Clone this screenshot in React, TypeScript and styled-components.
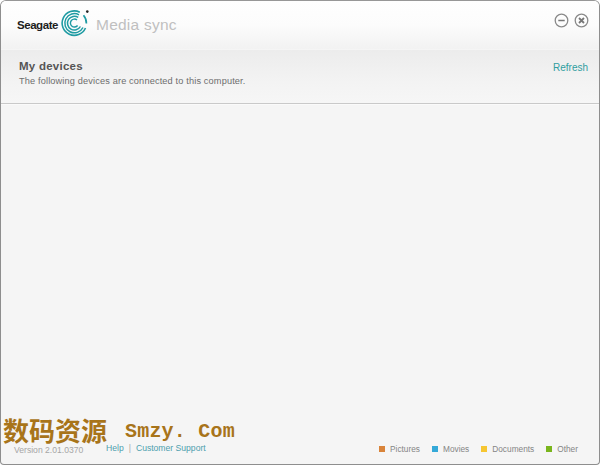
import { createGlobalStyle, styled } from "styled-components"

const Global = createGlobalStyle`
  html, body { margin: 0; padding: 0; background: #fff; }
  body { font-family: "Liberation Sans", Arial, sans-serif; }
`

const Window = styled.div`
  position: relative;
  box-sizing: border-box;
  width: 600px;
  height: 465px;
  display: flex;
  flex-direction: column;
  background: #f5f5f5;
  border: 1px solid #8e8e8e;
  border-top-color: #979797;
  border-radius: 6px 6px 4px 4px;
  overflow: hidden;
`

const Header = styled.div`
  height: 48px;
  flex: none;
  box-sizing: border-box;
  display: flex;
  align-items: flex-start;
  justify-content: space-between;
  background: linear-gradient(#fefefe, #fcfcfc 50%, #f2f2f2);
  padding: 8px 10px 0 16px;
`

const Brand = styled.div`
  display: flex;
  align-items: center;
  gap: 2px;
`

const BrandName = styled.span`
  font-size: 11.5px;
  font-weight: 700;
  letter-spacing: -0.45px;
  color: #1d1d1d;
  margin-top: 4px;
`

const AppName = styled.span`
  font-size: 15.5px;
  color: #c0c0c0;
  margin: 4px 0 0 5px;
  letter-spacing: 0.25px;
`

const WindowButtons = styled.div`
  display: flex;
  gap: 5px;
  margin-top: 4px;
`

const Devices = styled.div`
  height: 54px;
  flex: none;
  box-sizing: border-box;
  margin-top: 1px;
  padding: 10px 11px 0 18px;
  display: flex;
  justify-content: space-between;
  background: linear-gradient(#ececec, #f3f3f3 60%, #f6f6f6);
  border-bottom: 1px solid #c9c9c9;
`

const Title = styled.div`
  font-size: 11.5px;
  font-weight: 700;
  color: #555;
  letter-spacing: 0.25px;
`

const Subtitle = styled.div`
  font-size: 9.2px;
  color: #6d6d6d;
  margin-top: 4px;
  letter-spacing: 0.15px;
`

const Refresh = styled.a`
  font-size: 10px;
  color: #2f9ea0;
  margin-top: 2px;
`

const Content = styled.div`
  flex: 1;
  border-top: 1px solid #fafafa;
`

const Footer = styled.div`
  height: 22px;
  flex: none;
  display: flex;
  justify-content: space-between;
  padding: 0 21px 0 13px;
  font-size: 8.6px;
`

const Links = styled.div`
  display: flex;
  margin-top: 1px;
`

const Version = styled.span`
  color: #a6a6a6;
  font-size: 8.6px;
  width: 92px;
  margin-top: 2px;
`

const Link = styled.a`
  color: #4d9fae;
`

const Sep = styled.span`
  color: #aaa;
  margin: 0 5px;
`

const Legend = styled.div`
  display: flex;
  gap: 12px;
  margin-top: 1px;
`

const LegendItem = styled.div`
  display: flex;
  align-items: center;
  gap: 5px;
  height: 11px;
  color: #858585;
  font-size: 8.3px;
`

const Swatch = styled.i<{ $color: string }>`
  width: 6px;
  height: 6px;
  background: ${(p) => p.$color};
`

const Watermark = styled.div`
  position: absolute;
  left: 2px;
  top: 414px;
  display: flex;
  align-items: center;
  gap: 18px;
  color: #a8741a;
  font-weight: 700;
  white-space: nowrap;
`

const WatermarkCjk = styled.span`
  font-family: "Noto Sans CJK SC", sans-serif;
  font-size: 26px;
  line-height: 30px;
`

const WatermarkLatin = styled.span`
  font-family: "Liberation Mono", monospace;
  font-size: 20px;
  letter-spacing: 0.2px;
  margin-top: 3px;
`

function Logo() {
  return (
    <svg width="29" height="28" viewBox="0 0 29 28" fill="none" stroke="#1f9ba3">
      <path d="M19.8 3.2A12.2 12.2 0 1 0 25.5 19" strokeWidth="1.6" />
      <path d="M19 5.8A9.6 9.6 0 1 0 23 18.5" strokeWidth="1.5" />
      <path d="M18.2 8.4A6.9 6.9 0 1 0 20.4 17.5" strokeWidth="1.5" />
      <path d="M17 11A4 4 0 1 0 17.6 16.5" strokeWidth="1.4" />
      <path d="M23.5 6.2A12 12 0 0 1 26.4 14.5" strokeWidth="1.7" />
      <circle cx="27.3" cy="2.6" r="1.3" fill="#222" stroke="none" />
    </svg>
  )
}

function MinimizeIcon() {
  return (
    <svg width="15" height="15" viewBox="0 0 15 15" fill="none">
      <circle cx="7.5" cy="7.5" r="6.3" stroke="#8a8a8a" strokeWidth="1.3" />
      <path d="M4.3 7.5h6.4" stroke="#777" strokeWidth="1.7" />
    </svg>
  )
}

function CloseIcon() {
  return (
    <svg width="15" height="15" viewBox="0 0 15 15" fill="none">
      <circle cx="7.5" cy="7.5" r="6.3" stroke="#8a8a8a" strokeWidth="1.3" />
      <path d="M5 5l5 5M10 5l-5 5" stroke="#777" strokeWidth="1.8" />
    </svg>
  )
}

const legend = [
  { label: "Pictures", color: "#d9843a" },
  { label: "Movies", color: "#35a9d8" },
  { label: "Documents", color: "#f6c631" },
  { label: "Other", color: "#7ab51d" },
]

export default function App() {
  return (
    <Window>
      <Global />
      <Header>
        <Brand>
          <BrandName>Seagate</BrandName>
          <Logo />
          <AppName>Media sync</AppName>
        </Brand>
        <WindowButtons>
          <MinimizeIcon />
          <CloseIcon />
        </WindowButtons>
      </Header>
      <Devices>
        <div>
          <Title>My devices</Title>
          <Subtitle>The following devices are connected to this computer.</Subtitle>
        </div>
        <Refresh>Refresh</Refresh>
      </Devices>
      <Content />
      <Footer>
        <Links>
          <Version>Version 2.01.0370</Version>
          <Link>Help</Link>
          <Sep>|</Sep>
          <Link>Customer Support</Link>
        </Links>
        <Legend>
          {legend.map((item) => (
            <LegendItem key={item.label}>
              <Swatch $color={item.color} />
              {item.label}
            </LegendItem>
          ))}
        </Legend>
      </Footer>
      <Watermark>
        <WatermarkCjk>数码资源</WatermarkCjk>
        <WatermarkLatin>Smzy. Com</WatermarkLatin>
      </Watermark>
    </Window>
  )
}
